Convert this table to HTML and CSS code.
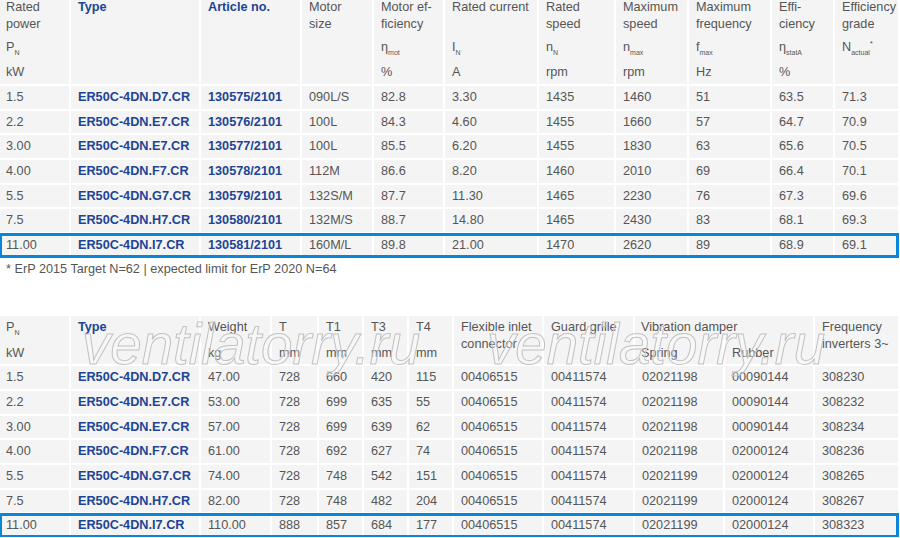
FILE: index.html
```html
<!DOCTYPE html>
<html>
<head>
<meta charset="utf-8">
<link rel="stylesheet" href="styles.css">
</head>
<body>
<div class="tbl t1">
  <div class="row h1">
    <div class="c"><div class="ttl">Rated<br>power</div><div class="sym">P<sub>N</sub></div><div class="unit">kW</div></div>
    <div class="c b"><div class="ttl">Type</div></div>
    <div class="c b"><div class="ttl">Article no.</div></div>
    <div class="c"><div class="ttl">Motor<br>size</div></div>
    <div class="c"><div class="ttl">Motor ef-<br>ficiency</div><div class="sym">η<sub>mot</sub></div><div class="unit">%</div></div>
    <div class="c"><div class="ttl">Rated current</div><div class="sym">I<sub>N</sub></div><div class="unit">A</div></div>
    <div class="c"><div class="ttl">Rated<br>speed</div><div class="sym">n<sub>N</sub></div><div class="unit">rpm</div></div>
    <div class="c"><div class="ttl">Maximum<br>speed</div><div class="sym">n<sub>max</sub></div><div class="unit">rpm</div></div>
    <div class="c"><div class="ttl">Maximum<br>frequency</div><div class="sym">f<sub>max</sub></div><div class="unit">Hz</div></div>
    <div class="c"><div class="ttl">Effi-<br>ciency</div><div class="sym">η<sub>statA</sub></div><div class="unit">%</div></div>
    <div class="c"><div class="ttl">Efficiency<br>grade</div><div class="sym">N<sub>actual</sub><sup>*</sup></div><div class="unit"></div></div>
  </div>
  <div class="row data"><div class="c">1.5</div><div class="c b">ER50C-4DN.D7.CR</div><div class="c b">130575/2101</div><div class="c">090L/S</div><div class="c">82.8</div><div class="c">3.30</div><div class="c">1435</div><div class="c">1460</div><div class="c">51</div><div class="c">63.5</div><div class="c">71.3</div></div>
  <div class="row data"><div class="c">2.2</div><div class="c b">ER50C-4DN.E7.CR</div><div class="c b">130576/2101</div><div class="c">100L</div><div class="c">84.3</div><div class="c">4.60</div><div class="c">1455</div><div class="c">1660</div><div class="c">57</div><div class="c">64.7</div><div class="c">70.9</div></div>
  <div class="row data"><div class="c">3.00</div><div class="c b">ER50C-4DN.E7.CR</div><div class="c b">130577/2101</div><div class="c">100L</div><div class="c">85.5</div><div class="c">6.20</div><div class="c">1455</div><div class="c">1830</div><div class="c">63</div><div class="c">65.6</div><div class="c">70.5</div></div>
  <div class="row data"><div class="c">4.00</div><div class="c b">ER50C-4DN.F7.CR</div><div class="c b">130578/2101</div><div class="c">112M</div><div class="c">86.6</div><div class="c">8.20</div><div class="c">1460</div><div class="c">2010</div><div class="c">69</div><div class="c">66.4</div><div class="c">70.1</div></div>
  <div class="row data"><div class="c">5.5</div><div class="c b">ER50C-4DN.G7.CR</div><div class="c b">130579/2101</div><div class="c">132S/M</div><div class="c">87.7</div><div class="c">11.30</div><div class="c">1465</div><div class="c">2230</div><div class="c">76</div><div class="c">67.3</div><div class="c">69.6</div></div>
  <div class="row data"><div class="c">7.5</div><div class="c b">ER50C-4DN.H7.CR</div><div class="c b">130580/2101</div><div class="c">132M/S</div><div class="c">88.7</div><div class="c">14.80</div><div class="c">1465</div><div class="c">2430</div><div class="c">83</div><div class="c">68.1</div><div class="c">69.3</div></div>
  <div class="row data hl"><div class="c">11.00</div><div class="c b">ER50C-4DN.I7.CR</div><div class="c b">130581/2101</div><div class="c">160M/L</div><div class="c">89.8</div><div class="c">21.00</div><div class="c">1470</div><div class="c">2620</div><div class="c">89</div><div class="c">68.9</div><div class="c">69.1</div></div>
</div>
<p class="note">* ErP 2015 Target N=62 | expected limit for ErP 2020 N=64</p>
<div class="tbl t2">
  <div class="row h2">
    <div class="c"><div class="ln">P<sub>N</sub></div><div class="unit2">kW</div></div>
    <div class="c b"><div class="ln">Type</div></div>
    <div class="c"><div class="ln">Weight</div><div class="unit2">kg</div></div>
    <div class="c"><div class="ln">T</div><div class="unit2">mm</div></div>
    <div class="c"><div class="ln">T1</div><div class="unit2">mm</div></div>
    <div class="c"><div class="ln">T3</div><div class="unit2">mm</div></div>
    <div class="c"><div class="ln">T4</div><div class="unit2">mm</div></div>
    <div class="c"><div class="ln">Flexible inlet<br>connector</div></div>
    <div class="c"><div class="ln">Guard grille</div></div>
    <div class="c vib"><div class="ln">Vibration damper</div></div>
    <div class="c spring">Spring</div>
    <div class="c rubber">Rubber</div>
    <div class="c freq"><div class="ln">Frequency<br>inverters 3~</div></div>
  </div>
  <div class="row data"><div class="c">1.5</div><div class="c b">ER50C-4DN.D7.CR</div><div class="c">47.00</div><div class="c">728</div><div class="c">660</div><div class="c">420</div><div class="c">115</div><div class="c">00406515</div><div class="c">00411574</div><div class="c">02021198</div><div class="c">00090144</div><div class="c">308230</div></div>
  <div class="row data"><div class="c">2.2</div><div class="c b">ER50C-4DN.E7.CR</div><div class="c">53.00</div><div class="c">728</div><div class="c">699</div><div class="c">635</div><div class="c">55</div><div class="c">00406515</div><div class="c">00411574</div><div class="c">02021198</div><div class="c">00090144</div><div class="c">308232</div></div>
  <div class="row data"><div class="c">3.00</div><div class="c b">ER50C-4DN.E7.CR</div><div class="c">57.00</div><div class="c">728</div><div class="c">699</div><div class="c">639</div><div class="c">62</div><div class="c">00406515</div><div class="c">00411574</div><div class="c">02021198</div><div class="c">00090144</div><div class="c">308234</div></div>
  <div class="row data"><div class="c">4.00</div><div class="c b">ER50C-4DN.F7.CR</div><div class="c">61.00</div><div class="c">728</div><div class="c">692</div><div class="c">627</div><div class="c">74</div><div class="c">00406515</div><div class="c">00411574</div><div class="c">02021198</div><div class="c">02000124</div><div class="c">308236</div></div>
  <div class="row data"><div class="c">5.5</div><div class="c b">ER50C-4DN.G7.CR</div><div class="c">74.00</div><div class="c">728</div><div class="c">748</div><div class="c">542</div><div class="c">151</div><div class="c">00406515</div><div class="c">00411574</div><div class="c">02021199</div><div class="c">02000124</div><div class="c">308265</div></div>
  <div class="row data"><div class="c">7.5</div><div class="c b">ER50C-4DN.H7.CR</div><div class="c">82.00</div><div class="c">728</div><div class="c">748</div><div class="c">482</div><div class="c">204</div><div class="c">00406515</div><div class="c">00411574</div><div class="c">02021199</div><div class="c">02000124</div><div class="c">308267</div></div>
  <div class="row data hl"><div class="c">11.00</div><div class="c b">ER50C-4DN.I7.CR</div><div class="c">110.00</div><div class="c">888</div><div class="c">857</div><div class="c">684</div><div class="c">177</div><div class="c">00406515</div><div class="c">00411574</div><div class="c">02021199</div><div class="c">02000124</div><div class="c">308323</div></div>
  <div class="wm wm1">ventilatorry.ru</div>
  <div class="wm wm2">ventilatorry.ru</div>
</div>
</body>
</html>
```

FILE: styles.css
```css
html, body {
  margin: 0;
  padding: 0;
  background: #ffffff;
}

body {
  font-family: "Liberation Sans", Arial, sans-serif;
  font-size: 12.7px;
  color: #565656;
  overflow: hidden;
}

.tbl {
  display: flex;
  flex-direction: column;
  gap: 2px;
  width: 898px;
}

.t1 {
  margin-top: -1px;
}

.t2 {
  position: relative;
}

.row {
  display: grid;
  column-gap: 2px;
}

.t1 .row {
  grid-template-columns: 69px 128px 99px 70px 69px 92px 75px 71px 81px 61px 63px;
}

.t2 .row {
  grid-template-columns: 69px 128px 69px 45px 43px 43px 43px 88px 89px 88px 88px 83px;
}

.c {
  background: #f4f4f4;
  padding: 0 4px 0 7px;
  white-space: nowrap;
}

.row .c:first-child {
  padding-left: 6px;
}

.b {
  color: #1e4595;
  font-weight: bold;
}

.data .c {
  height: 22.7px;
  line-height: 22.7px;
}

.hl {
  outline: 3px solid #0a86d8;
  outline-offset: -2px;
}

/* top header */
.h1 .c {
  line-height: 17px;
  padding-bottom: 3px;
}

.ttl {
  height: 34px;
}

.sym {
  margin-top: 6px;
  height: 17px;
}

.unit {
  margin-top: 8px;
  height: 17px;
}

sub {
  font-size: 7px;
  line-height: 0;
  vertical-align: -4px;
}

sup {
  font-size: 8px;
  line-height: 0;
  vertical-align: 5px;
}

/* bottom header */
.h2 {
  grid-template-rows: 24px 24px;
}

.h2 .c {
  grid-row: 1 / 3;
  padding-top: 3px;
  line-height: 17px;
}

.unit2 {
  margin-top: 9px;
}

.h2 .vib {
  grid-column: 10 / 12;
  grid-row: 1;
  padding-left: 6px;
}

.h2 .spring {
  grid-column: 10;
  grid-row: 2;
  padding-top: 5px;
  padding-left: 6px;
}

.h2 .rubber {
  grid-column: 11;
  grid-row: 2;
  padding-top: 5px;
}

.h2 .freq {
  grid-column: 12;
}

.note {
  margin: 4.5px 0 38px 0;
  padding-left: 6px;
  line-height: 17px;
  font-size: 12.7px;
}

.wm {
  position: absolute;
  top: 1px;
  font-family: "Liberation Sans", Arial, sans-serif;
  font-style: italic;
  font-size: 56.5px;
  line-height: 55px;
  color: rgba(255, 255, 255, 0.25);
  -webkit-text-stroke: 1px #c2c2c2;
  pointer-events: none;
  white-space: nowrap;
}

.wm1 {
  left: 82px;
}

.wm2 {
  left: 487px;
}
```
